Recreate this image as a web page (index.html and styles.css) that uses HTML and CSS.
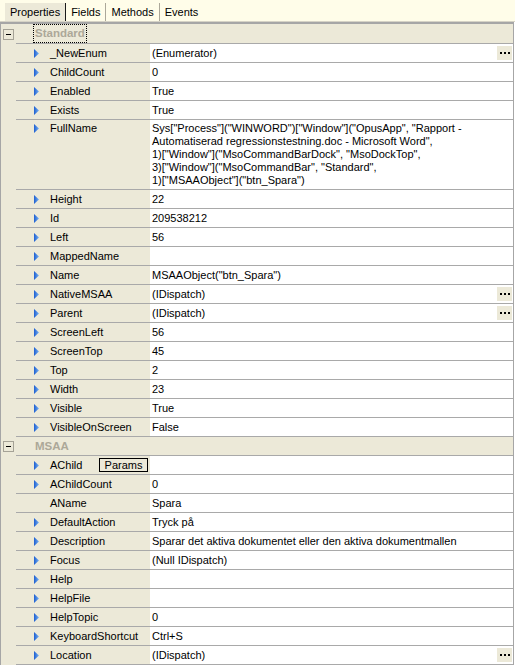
FILE: index.html
```html
<!DOCTYPE html>
<html>
<head>
<meta charset="utf-8">
<link rel="stylesheet" href="styles.css">
</head>
<body>
<div class="tabs">
  <div class="tab active">Properties</div>
  <div class="tab">Fields</div>
  <div class="tab">Methods</div>
  <div class="tab last">Events</div>
</div>
<div class="grid">
  <div class="sec-head first">
    <div class="gutter"><span class="toggle"><span class="minus"></span></span></div>
    <div class="sec-cell"><span class="sec-title focus">Standard</span></div>
  </div>

  <div class="row"><div class="gutter"></div><div class="cells"><div class="name"><svg class="arrow" viewBox="0 0 5 9"><defs><linearGradient id="g" x1="0" y1="0" x2="1" y2="0"><stop offset="0" stop-color="#1e5fd0"/><stop offset="1" stop-color="#79b2f2"/></linearGradient></defs><polygon points="0,0 5,4.5 0,9" fill="url(#g)"/></svg><span class="label">_NewEnum</span></div><div class="value"><span class="text">(Enumerator)</span><span class="ellipsis"><i></i><i></i><i></i></span></div></div></div>
  <div class="row"><div class="gutter"></div><div class="cells"><div class="name"><svg class="arrow" viewBox="0 0 5 9"><polygon points="0,0 5,4.5 0,9" fill="url(#g)"/></svg><span class="label">ChildCount</span></div><div class="value"><span class="text">0</span></div></div></div>
  <div class="row"><div class="gutter"></div><div class="cells"><div class="name"><svg class="arrow" viewBox="0 0 5 9"><polygon points="0,0 5,4.5 0,9" fill="url(#g)"/></svg><span class="label">Enabled</span></div><div class="value"><span class="text">True</span></div></div></div>
  <div class="row"><div class="gutter"></div><div class="cells"><div class="name"><svg class="arrow" viewBox="0 0 5 9"><polygon points="0,0 5,4.5 0,9" fill="url(#g)"/></svg><span class="label">Exists</span></div><div class="value"><span class="text">True</span></div></div></div>
  <div class="row tall"><div class="gutter"></div><div class="cells"><div class="name"><svg class="arrow" viewBox="0 0 5 9"><polygon points="0,0 5,4.5 0,9" fill="url(#g)"/></svg><span class="label">FullName</span></div><div class="value"><span class="text multi">Sys["Process"]("WINWORD")["Window"]("OpusApp", "Rapport -<br>Automatiserad regressionstestning.doc - Microsoft Word",<br>1)["Window"]("MsoCommandBarDock", "MsoDockTop",<br>3)["Window"]("MsoCommandBar", "Standard",<br>1)["MSAAObject"]("btn_Spara")</span></div></div></div>
  <div class="row"><div class="gutter"></div><div class="cells"><div class="name"><svg class="arrow" viewBox="0 0 5 9"><polygon points="0,0 5,4.5 0,9" fill="url(#g)"/></svg><span class="label">Height</span></div><div class="value"><span class="text">22</span></div></div></div>
  <div class="row"><div class="gutter"></div><div class="cells"><div class="name"><svg class="arrow" viewBox="0 0 5 9"><polygon points="0,0 5,4.5 0,9" fill="url(#g)"/></svg><span class="label">Id</span></div><div class="value"><span class="text">209538212</span></div></div></div>
  <div class="row"><div class="gutter"></div><div class="cells"><div class="name"><svg class="arrow" viewBox="0 0 5 9"><polygon points="0,0 5,4.5 0,9" fill="url(#g)"/></svg><span class="label">Left</span></div><div class="value"><span class="text">56</span></div></div></div>
  <div class="row"><div class="gutter"></div><div class="cells"><div class="name"><svg class="arrow" viewBox="0 0 5 9"><polygon points="0,0 5,4.5 0,9" fill="url(#g)"/></svg><span class="label">MappedName</span></div><div class="value"><span class="text"></span></div></div></div>
  <div class="row"><div class="gutter"></div><div class="cells"><div class="name"><svg class="arrow" viewBox="0 0 5 9"><polygon points="0,0 5,4.5 0,9" fill="url(#g)"/></svg><span class="label">Name</span></div><div class="value"><span class="text">MSAAObject("btn_Spara")</span></div></div></div>
  <div class="row"><div class="gutter"></div><div class="cells"><div class="name"><svg class="arrow" viewBox="0 0 5 9"><polygon points="0,0 5,4.5 0,9" fill="url(#g)"/></svg><span class="label">NativeMSAA</span></div><div class="value"><span class="text">(IDispatch)</span><span class="ellipsis"><i></i><i></i><i></i></span></div></div></div>
  <div class="row"><div class="gutter"></div><div class="cells"><div class="name"><svg class="arrow" viewBox="0 0 5 9"><polygon points="0,0 5,4.5 0,9" fill="url(#g)"/></svg><span class="label">Parent</span></div><div class="value"><span class="text">(IDispatch)</span><span class="ellipsis"><i></i><i></i><i></i></span></div></div></div>
  <div class="row"><div class="gutter"></div><div class="cells"><div class="name"><svg class="arrow" viewBox="0 0 5 9"><polygon points="0,0 5,4.5 0,9" fill="url(#g)"/></svg><span class="label">ScreenLeft</span></div><div class="value"><span class="text">56</span></div></div></div>
  <div class="row"><div class="gutter"></div><div class="cells"><div class="name"><svg class="arrow" viewBox="0 0 5 9"><polygon points="0,0 5,4.5 0,9" fill="url(#g)"/></svg><span class="label">ScreenTop</span></div><div class="value"><span class="text">45</span></div></div></div>
  <div class="row"><div class="gutter"></div><div class="cells"><div class="name"><svg class="arrow" viewBox="0 0 5 9"><polygon points="0,0 5,4.5 0,9" fill="url(#g)"/></svg><span class="label">Top</span></div><div class="value"><span class="text">2</span></div></div></div>
  <div class="row"><div class="gutter"></div><div class="cells"><div class="name"><svg class="arrow" viewBox="0 0 5 9"><polygon points="0,0 5,4.5 0,9" fill="url(#g)"/></svg><span class="label">Width</span></div><div class="value"><span class="text">23</span></div></div></div>
  <div class="row"><div class="gutter"></div><div class="cells"><div class="name"><svg class="arrow" viewBox="0 0 5 9"><polygon points="0,0 5,4.5 0,9" fill="url(#g)"/></svg><span class="label">Visible</span></div><div class="value"><span class="text">True</span></div></div></div>
  <div class="row"><div class="gutter"></div><div class="cells"><div class="name"><svg class="arrow" viewBox="0 0 5 9"><polygon points="0,0 5,4.5 0,9" fill="url(#g)"/></svg><span class="label">VisibleOnScreen</span></div><div class="value"><span class="text">False</span></div></div></div>

  <div class="sec-head">
    <div class="gutter"><span class="toggle"><span class="minus"></span></span></div>
    <div class="sec-cell"><span class="sec-title">MSAA</span></div>
  </div>

  <div class="row"><div class="gutter"></div><div class="cells"><div class="name"><svg class="arrow" viewBox="0 0 5 9"><polygon points="0,0 5,4.5 0,9" fill="url(#g)"/></svg><span class="label">AChild</span><span class="params">Params</span></div><div class="value"><span class="text"></span></div></div></div>
  <div class="row"><div class="gutter"></div><div class="cells"><div class="name"><svg class="arrow" viewBox="0 0 5 9"><polygon points="0,0 5,4.5 0,9" fill="url(#g)"/></svg><span class="label">AChildCount</span></div><div class="value"><span class="text">0</span></div></div></div>
  <div class="row"><div class="gutter"></div><div class="cells"><div class="name"><span class="label noarrow">AName</span></div><div class="value"><span class="text">Spara</span></div></div></div>
  <div class="row"><div class="gutter"></div><div class="cells"><div class="name"><svg class="arrow" viewBox="0 0 5 9"><polygon points="0,0 5,4.5 0,9" fill="url(#g)"/></svg><span class="label">DefaultAction</span></div><div class="value"><span class="text">Tryck på</span></div></div></div>
  <div class="row"><div class="gutter"></div><div class="cells"><div class="name"><svg class="arrow" viewBox="0 0 5 9"><polygon points="0,0 5,4.5 0,9" fill="url(#g)"/></svg><span class="label">Description</span></div><div class="value"><span class="text">Sparar det aktiva dokumentet eller den aktiva dokumentmallen</span></div></div></div>
  <div class="row"><div class="gutter"></div><div class="cells"><div class="name"><svg class="arrow" viewBox="0 0 5 9"><polygon points="0,0 5,4.5 0,9" fill="url(#g)"/></svg><span class="label">Focus</span></div><div class="value"><span class="text">(Null IDispatch)</span></div></div></div>
  <div class="row"><div class="gutter"></div><div class="cells"><div class="name"><svg class="arrow" viewBox="0 0 5 9"><polygon points="0,0 5,4.5 0,9" fill="url(#g)"/></svg><span class="label">Help</span></div><div class="value"><span class="text"></span></div></div></div>
  <div class="row"><div class="gutter"></div><div class="cells"><div class="name"><svg class="arrow" viewBox="0 0 5 9"><polygon points="0,0 5,4.5 0,9" fill="url(#g)"/></svg><span class="label">HelpFile</span></div><div class="value"><span class="text"></span></div></div></div>
  <div class="row"><div class="gutter"></div><div class="cells"><div class="name"><svg class="arrow" viewBox="0 0 5 9"><polygon points="0,0 5,4.5 0,9" fill="url(#g)"/></svg><span class="label">HelpTopic</span></div><div class="value"><span class="text">0</span></div></div></div>
  <div class="row"><div class="gutter"></div><div class="cells"><div class="name"><svg class="arrow" viewBox="0 0 5 9"><polygon points="0,0 5,4.5 0,9" fill="url(#g)"/></svg><span class="label">KeyboardShortcut</span></div><div class="value"><span class="text">Ctrl+S</span></div></div></div>
  <div class="row"><div class="gutter"></div><div class="cells"><div class="name"><svg class="arrow" viewBox="0 0 5 9"><polygon points="0,0 5,4.5 0,9" fill="url(#g)"/></svg><span class="label">Location</span></div><div class="value"><span class="text">(IDispatch)</span><span class="ellipsis"><i></i><i></i><i></i></span></div></div></div>
</div>
</body>
</html>
```
FILE: styles.css
```css
html, body {
  margin: 0;
  padding: 0;
  background: #ffffff;
}
body {
  width: 515px;
  height: 666px;
  overflow: hidden;
  font-family: "Liberation Sans", Arial, sans-serif;
  font-size: 11px;
  color: #000;
}
.tabs {
  display: flex;
  align-items: flex-end;
  height: 21px;
  padding-left: 5px;
  background: #fffde9;
  border-bottom: 1px solid #d6d3c6;
}
.tab {
  height: 18px;
  line-height: 18px;
  padding: 0 5px;
  border-right: 1px solid #aca899;
  white-space: nowrap;
}
.tab.active {
  background: #ece9d8;
  border-right: 1px solid #1a1a1a;
}
.tab.last {
  border-right: none;
}
.grid {
  width: 514px;
  box-sizing: border-box;
  border-top: 2px solid #a6a6a6;
  border-left: 1px solid #a6a6a6;
  border-right: 1px solid #a6a6a6;
  background: #ece9d8;
}
.gutter {
  width: 15px;
  flex: none;
  display: flex;
  align-items: center;
}
.sec-head {
  display: flex;
}
.sec-cell {
  flex: 1;
  height: 18px;
  display: flex;
  align-items: center;
  border-bottom: 1px solid #a9a9a9;
}
.sec-head.first .sec-cell {
  height: 19px;
}
.sec-title {
  margin-left: 18px;
  font-weight: bold;
  font-size: 11.5px;
  color: #aca899;
  padding: 2px 1px;
  line-height: 13px;
}
.focus {
  outline: 1px dotted #000;
  outline-offset: 0;
}
.toggle {
  width: 9px;
  height: 9px;
  margin-left: 2px;
  border: 1px solid #a5a296;
  display: flex;
  align-items: center;
  justify-content: center;
}
.minus {
  width: 5px;
  height: 1px;
  background: #000;
}
.row {
  display: flex;
}
.cells {
  flex: 1;
  display: flex;
  border-bottom: 1px solid #a9a9a9;
}
.name {
  width: 134px;
  flex: none;
  height: 18px;
  display: flex;
  align-items: center;
  white-space: nowrap;
}
.arrow {
  width: 5px;
  height: 9px;
  flex: none;
  margin-left: 18px;
}
.label {
  margin-left: 11px;
}
.label.noarrow {
  margin-left: 34px;
}
.value {
  flex: 1;
  background: #fff;
  display: flex;
  align-items: center;
  padding-left: 2px;
  min-height: 18px;
}
.text {
  flex: 1;
  white-space: nowrap;
}
.row.tall .name {
  height: auto;
  align-items: flex-start;
  padding-top: 2px;
  line-height: 13px;
}
.row.tall .arrow {
  margin-top: 2px;
}
.row.tall .value {
  align-items: flex-start;
  padding-top: 2px;
  padding-bottom: 2px;
}
.multi {
  line-height: 13px;
}
.ellipsis {
  width: 15px;
  height: 14px;
  margin-right: 1px;
  background: #ece9d8;
  display: flex;
  align-items: center;
  justify-content: center;
  gap: 2px;
  flex: none;
}
.ellipsis i {
  width: 2px;
  height: 2px;
  background: #000;
}
.params {
  margin-left: auto;
  margin-right: 2px;
  width: 47px;
  height: 12px;
  line-height: 12px;
  border: 1px solid #000;
  background: #ece9d8;
  text-align: center;
}
```
